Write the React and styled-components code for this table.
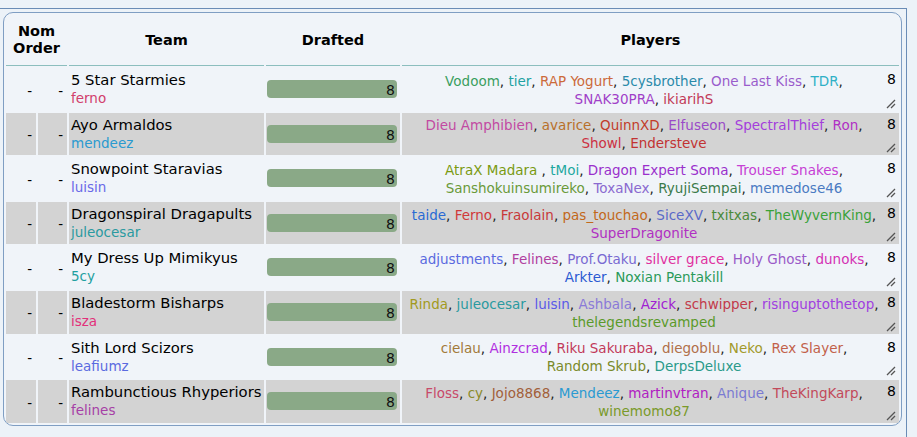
import React from "react"
import styled, { createGlobalStyle } from 'styled-components'

const GlobalStyle = createGlobalStyle`
  html, body {
    margin: 0;
    padding: 0;
    background: #ecf2f8;
    font-family: 'DejaVu Sans', 'Liberation Sans', sans-serif;
  }
`

const Frame = styled.div`
  box-sizing: border-box;
  width: 907px;
  min-height: calc(100vh - 8px);
  margin-top: 8px;
  padding: 3px 4px 0 3px;
  border-top: 1px solid #6a8cb6;
  border-right: 1px solid #6a8cb6;
`

const Box = styled.div`
  border: 1px solid #7f9ec3;
  border-radius: 10px;
  background: #f0f4f9;
  overflow: hidden;
`

const Table = styled.table`
  width: 100%;
  table-layout: fixed;
  border-collapse: separate;
  border-spacing: 2px;
`

const Th = styled.th`
  height: 50px;
  padding: 0 2px;
  font-size: 14.5px;
  line-height: 17px;
  font-weight: bold;
  color: #000;
  text-align: center;
  vertical-align: middle;
  border-bottom: 1px solid #8cbebe;
`

const Row = styled.tr`
  background: ${p => (p.$shade ? '#d3d3d3' : 'transparent')};
`

const Td = styled.td`
  padding: 3px 2px 3.6px;
  font-size: 13.5px;
  line-height: 18px;
  vertical-align: middle;
  text-align: ${p => p.$align || 'left'};
  color: #000;
`

const Dash = styled(Td)`
  padding-right: 4px;
  padding-top: 6px;
`

const TeamName = styled.div`
  font-size: 14.8px;
  white-space: nowrap;
`

const Coach = styled.div`
  color: ${p => p.$color};
`

const Bar = styled.div`
  height: 18px;
  margin: 0 1px 0 -1px;
  border-radius: 4px;
  background: #8aa987;
  text-align: right;
  padding-right: 2px;
  font-size: 14px;
  line-height: 20px;
  color: #111;
`

const PlayersCell = styled.td`
  padding: 0;
  vertical-align: top;
  height: 42.6px;
`

const PlayersWrap = styled.div`
  display: flex;
  height: 100%;
  min-height: 42.6px;
  box-sizing: border-box;
  padding: 3px 0 2px 4px;
`

const Names = styled.div`
  flex: 1;
  text-align: center;
  font-size: 13.5px;
  line-height: 18px;
  color: #222;
  align-self: center;
`

const Name = styled.span`
  color: ${p => p.$color};
  white-space: nowrap;
`

const Side = styled.div`
  width: 14px;
  display: flex;
  flex-direction: column;
  justify-content: space-between;
  align-items: flex-end;
  padding-right: 3px;
  font-size: 14px;
  line-height: 16px;
  color: #000;
`

const Grip = () => (
  <svg width="10" height="10" viewBox="0 0 10 10">
    <path d="M1 9 L9 1 M5 9 L9 5" stroke="#555" strokeWidth="1.3" fill="none" />
  </svg>
)

const rows = [
  { team: '5 Star Starmies', coach: ['ferno', '#d2406c'], players: [
    ['Vodoom', '#3a9e5e'], ['tier', '#1ea2a2'], ['RAP Yogurt', '#cc6a3a'], ['5cysbrother', '#2a8aaa'],
    ['One Last Kiss', '#9a5ccc'], ['TDR', '#2eb0c6'], ['SNAK30PRA', '#a040c8'], ['ikiarihS', '#c23a58']] },
  { team: 'Ayo Armaldos', coach: ['mendeez', '#2a9ad0'], players: [
    ['Dieu Amphibien', '#c24aa2'], ['avarice', '#b8702a'], ['QuinnXD', '#c23c2a'], ['Elfuseon', '#9a4ac8'],
    ['SpectralThief', '#a43edc'], ['Ron', '#b030c4'], ['Showl', '#cc3042'], ['Endersteve', '#c23232']] },
  { team: 'Snowpoint Staravias', coach: ['luisin', '#6a6ae8'], players: [
    ['AtraX Madara ', '#7a9a12'], ['tMoi', '#1ea8a0'], ['Dragon Expert Soma', '#9a30cc'], ['Trouser Snakes', '#c640d4'],
    ['Sanshokuinsumireko', '#6a9a3a'], ['ToxaNex', '#8a6ad0'], ['RyujiSempai', '#3a7a4a'], ['memedose46', '#4a7ac2']] },
  { team: 'Dragonspiral Dragapults', coach: ['juleocesar', '#2a9aa0'], players: [
    ['taide', '#2a6ad4'], ['Ferno', '#d03a3a'], ['Fraolain', '#c83a3a'], ['pas_touchao', '#c2681a'],
    ['SiceXV', '#5a6ac8'], ['txitxas', '#4a8a3a'], ['TheWyvernKing', '#3aa23a'], ['SuperDragonite', '#b030c2']] },
  { team: 'My Dress Up Mimikyus', coach: ['5cy', '#1ea0a0'], players: [
    ['adjustments', '#5a6ae0'], ['Felines', '#b040a0'], ['Prof.Otaku', '#7a6ad2'], ['silver grace', '#e030a0'],
    ['Holy Ghost', '#9a5ac8'], ['dunoks', '#d430b4'], ['Arkter', '#2a5ad2'], ['Noxian Pentakill', '#2a9a5a']] },
  { team: 'Bladestorm Bisharps', coach: ['isza', '#e2307a'], players: [
    ['Rinda', '#a29a20'], ['juleocesar', '#2a9aa0'], ['luisin', '#5a5ae8'], ['Ashbala', '#8a7ad8'],
    ['Azick', '#a020d2'], ['schwipper', '#c23a4a'], ['risinguptothetop', '#a040e0'], ['thelegendsrevamped', '#5a9a2a']] },
  { team: 'Sith Lord Scizors', coach: ['leafiumz', '#5a6ae0'], players: [
    ['cielau', '#a27a3a'], ['Ainzcrad', '#b030e0'], ['Riku Sakuraba', '#c23a5a'], ['diegoblu', '#b0704a'],
    ['Neko', '#a29a2a'], ['Rex Slayer', '#c2604a'], ['Random Skrub', '#7a8a2a'], ['DerpsDeluxe', '#2a9a8a']] },
  { team: 'Rambunctious Rhyperiors', coach: ['felines', '#a640a6'], players: [
    ['Floss', '#c84a6a'], ['cy', '#8a8a2a'], ['Jojo8868', '#a2603a'], ['Mendeez', '#2a9ad2'],
    ['martinvtran', '#b020c2'], ['Anique', '#7a7ad2'], ['TheKingKarp', '#c24a5a'], ['winemomo87', '#7a9a2a']] },
]

const App = () => (
  <>
    <GlobalStyle />
    <Frame>
      <Box>
        <Table>
          <colgroup>
            <col style={{ width: 30 }} />
            <col style={{ width: 29 }} />
            <col style={{ width: 195 }} />
            <col style={{ width: 134 }} />
            <col />
          </colgroup>
          <thead>
            <tr>
              <Th colSpan={2}>Nom<br />Order</Th>
              <Th>Team</Th>
              <Th>Drafted</Th>
              <Th>Players</Th>
            </tr>
          </thead>
          <tbody>
            {rows.map((r, i) => (
              <Row key={r.team} $shade={i % 2 === 1}>
                <Dash $align="right">-</Dash>
                <Dash $align="right">-</Dash>
                <Td>
                  <TeamName>{r.team}</TeamName>
                  <Coach $color={r.coach[1]}>{r.coach[0]}</Coach>
                </Td>
                <Td>
                  <Bar>8</Bar>
                </Td>
                <PlayersCell>
                  <PlayersWrap>
                    <Names>
                      {r.players.map(([n, c], j) => (
                        <React.Fragment key={n}>
                          <Name $color={c}>{n}</Name>
                          {j < r.players.length - 1 ? ', ' : ''}
                        </React.Fragment>
                      ))}
                    </Names>
                    <Side>
                      <span>8</span>
                      <Grip />
                    </Side>
                  </PlayersWrap>
                </PlayersCell>
              </Row>
            ))}
          </tbody>
        </Table>
      </Box>
    </Frame>
  </>
)

export default App
